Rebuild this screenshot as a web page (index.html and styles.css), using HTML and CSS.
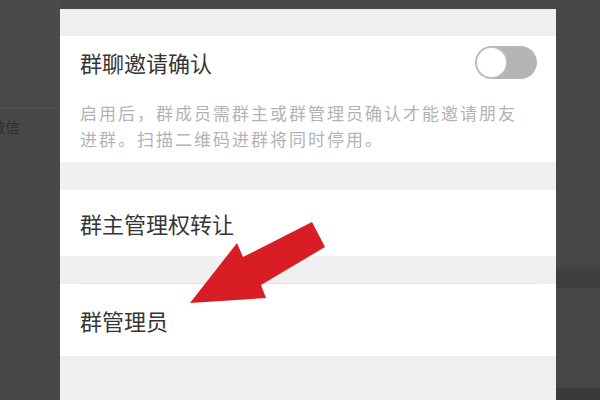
FILE: index.html
```html
<!DOCTYPE html>
<html lang="zh-CN">
<head>
<meta charset="utf-8">
<title>群设置</title>
<link rel="stylesheet" href="styles.css">
</head>
<body>
<div class="screen">
  <aside class="side-left">
    <div class="left-top"></div>
    <div class="left-item"><span class="left-text">微信</span></div>
  </aside>
  <main class="panel">
    <div class="gap gap-top"></div>
    <section class="row row-invite">
      <div class="row-head">
        <span class="title">群聊邀请确认</span>
        <span class="toggle"><span class="knob"></span></span>
      </div>
      <p class="desc">启用后，群成员需群主或群管理员确认才能邀请朋友<br>进群。扫描二维码进群将同时停用。</p>
    </section>
    <div class="gap gap-mid"></div>
    <section class="row row-transfer">
      <span class="title">群主管理权转让</span>
    </section>
    <div class="gap gap-mid2"></div>
    <div class="divider"></div>
    <section class="row row-admin">
      <span class="title">群管理员</span>
    </section>
    <div class="gap gap-bottom"></div>
  </main>
  <aside class="side-right">
    <div class="right-a"></div>
    <div class="right-band"></div>
    <div class="right-b"></div>
    <div class="right-band2"></div>
  </aside>
</div>
<svg class="arrow" width="600" height="400" viewBox="0 0 600 400" aria-hidden="true">
  <polygon points="312,222 325,247 261,285 266,298 190,303 237,243 243,257" fill="#d81e24"/>
</svg>
</body>
</html>
```

FILE: styles.css
```css
html, body {
  margin: 0;
  padding: 0;
}
body {
  width: 600px;
  height: 400px;
  overflow: hidden;
  background: #484848;
  font-family: "Noto Sans CJK SC", "Noto Sans", sans-serif;
  position: relative;
}
.screen {
  display: flex;
  width: 600px;
  height: 400px;
}
.side-left {
  width: 60px;
  flex: none;
  display: flex;
  flex-direction: column;
  background: #484848;
  overflow: hidden;
}
.left-top {
  height: 108px;
  background: #4a4a4a;
  border-bottom: 1px solid #525252;
}
.left-item {
  height: 36px;
  display: flex;
  align-items: center;
}
.left-text {
  margin-left: -10px;
  font-size: 15px;
  line-height: 20px;
  color: #2f2f2f;
  white-space: nowrap;
}
.panel {
  width: 496px;
  flex: none;
  margin-top: 9px;
  background: #f0f0f0;
  border-top: 1px solid #e6e6e6;
  display: flex;
  flex-direction: column;
}
.gap-top { height: 26px; }
.gap-mid { height: 28px; }
.gap-mid2 { height: 27px; }
.gap-bottom { flex: 1; }
.divider {
  height: 1px;
  margin: 0 19px 0 20px;
  background: #e2e2e2;
}
.row {
  background: #ffffff;
  padding: 0 19px 0 20px;
}
.title {
  font-size: 22px;
  line-height: 34px;
  color: #353535;
  white-space: nowrap;
}
.row-invite {
  height: 126px;
  box-sizing: border-box;
  padding-top: 9px;
}
.row-head {
  display: flex;
  align-items: center;
  justify-content: space-between;
  height: 34px;
}
.toggle {
  width: 62px;
  height: 33px;
  box-sizing: border-box;
  border-radius: 17px;
  background: #b5b5b5;
  padding: 2px;
  display: flex;
  align-items: center;
}
.knob {
  width: 29px;
  height: 29px;
  border-radius: 50%;
  background: #ffffff;
  box-shadow: 0 0 0 1px #c4c4c4;
}
.desc {
  margin: 21px 0 0;
  font-size: 17px;
  line-height: 26px;
  letter-spacing: 2px;
  color: #b3b3b3;
  white-space: nowrap;
}
.row-transfer {
  height: 66px;
  display: flex;
  align-items: center;
}
.row-admin {
  height: 72px;
  display: flex;
  align-items: center;
  padding-bottom: 1px;
  box-sizing: border-box;
}
.side-right {
  flex: 1;
  display: flex;
  flex-direction: column;
  background: #474747;
}
.right-a { height: 265px; background: #474747; }
.right-band {
  height: 23px;
  background: linear-gradient(#454545, #3c3e3e 40%, #3d3f3f);
}
.right-b { height: 100px; background: #464645; }
.right-band2 { flex: 1; background: #3b3a39; }
.arrow {
  position: absolute;
  left: 0;
  top: 0;
}
```
